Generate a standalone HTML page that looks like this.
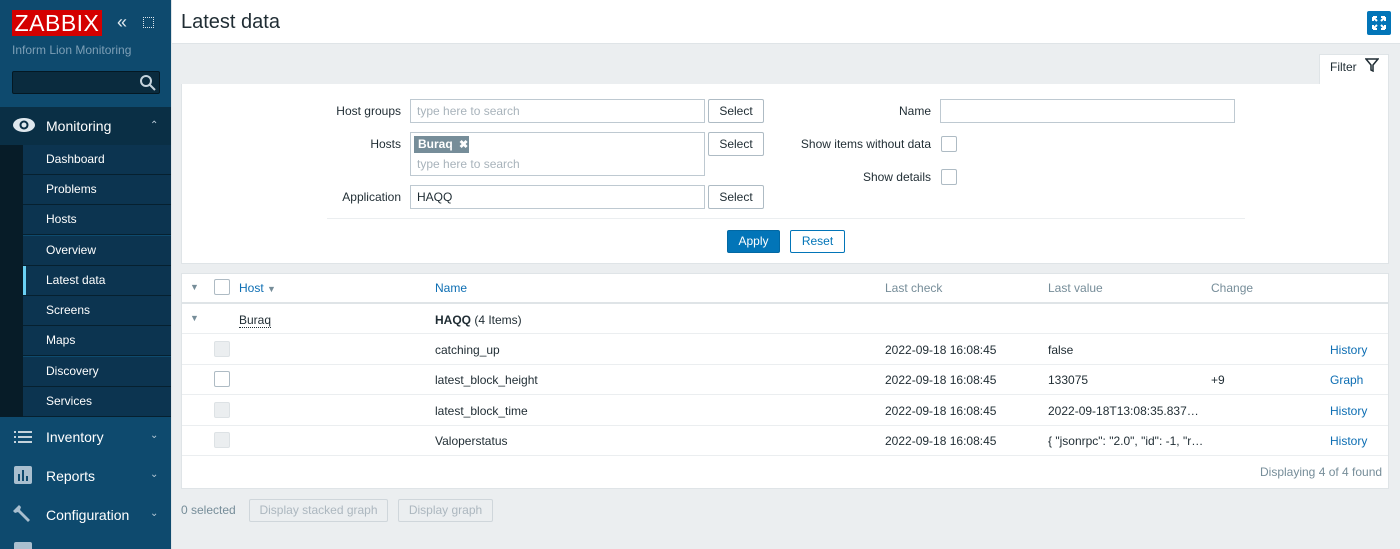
<!DOCTYPE html>
<html><head><meta charset="utf-8"><style>
*{box-sizing:border-box;margin:0;padding:0}
body{width:1400px;height:549px;overflow:hidden;background:#ebeef0;font-family:"Liberation Sans",Arial,sans-serif;font-size:12px;color:#1f2c33;position:relative}
.a{position:absolute}
#sb{left:0;top:0;width:171px;height:549px;background:#0e4a6e}
#sbb{left:171px;top:0;width:1px;height:549px;background:#dfe4e7}
.logo{left:12px;top:10px;width:90px;height:26px;background:#d40000;color:#fff;font-size:23px;line-height:26px;text-align:center;letter-spacing:0.5px}
.sub{color:#7d9fb6;font-size:12px}
.srch{left:12px;top:71px;width:148px;height:23px;background:#0a2b3e;border:1px solid #041823;border-radius:2px}
.mon{left:0;top:107px;width:171px;height:38px;background:#0a2f45}
.mi{color:#fff;font-size:14px}
.strip{left:0;top:145px;width:23px;height:272px;background:#071c28}
.si{left:23px;width:148px;height:30px;background:#0c3450;border-bottom:1px solid #06202f;color:#fff;font-size:12px;line-height:29px;padding-left:23px}
.chev{color:#b9cbd8;font-size:10px}
#hd{left:172px;top:0;width:1228px;height:44px;background:#fff;border-bottom:1px solid #dfe4e7}
.panel{background:#fff;border:1px solid #dfe4e7}
.lbl{text-align:right;width:240px;color:#1f2c33}
.inp{background:#fff;border:1px solid #bec9d1;height:24px;color:#a8b3bb;padding-left:6px;line-height:22px}
.btn{background:#fff;border:1px solid #aebbc4;height:24px;width:56px;text-align:center;line-height:22px;color:#1f2c33;border-radius:2px}
.cb{width:16px;height:16px;border:1px solid #aebbc4;border-radius:2px;background:#fff}
.cbd{width:16px;height:16px;border:1px solid #dde2e5;border-radius:2px;background:#ebeef0}
.row{left:182px;width:1206px;border-bottom:1px solid #ebeef0;height:30px}
.lnk{color:#0d6eb3}
.t{line-height:14px}
</style></head><body>
<div id="sb" class="a"></div><div id="sbb" class="a"></div>
<div class="a logo">ZABBIX</div>
<div class="a" style="left:117px;top:12px;color:#dfe8ee;font-size:18px;line-height:20px">«</div>
<div class="a" style="left:143px;top:17px;width:11px;height:11px;border:1px dotted #dfe8ee"></div>
<div class="a sub" style="left:12px;top:43px">Inform Lion Monitoring</div>
<div class="a srch"></div>
<svg class="a" style="left:139px;top:74px" width="18" height="18"><circle cx="7" cy="7" r="5" fill="none" stroke="#c5d3dc" stroke-width="2"/><line x1="11" y1="11" x2="16" y2="16" stroke="#c5d3dc" stroke-width="2"/></svg>
<div class="a mon"></div>
<svg class="a" style="left:12px;top:117px" width="24" height="16"><ellipse cx="12" cy="8" rx="11" ry="7" fill="#dfe8ee"/><circle cx="12" cy="8" r="4.5" fill="#0a2f45"/><circle cx="12" cy="8" r="2.5" fill="#dfe8ee"/></svg>
<div class="a mi" style="left:46px;top:118px">Monitoring</div>
<div class="a chev" style="left:150px;top:120px">&#8963;</div>
<div class="a strip"></div>
<div class="a si" style="top:145px">Dashboard</div>
<div class="a si" style="top:175px">Problems</div>
<div class="a si" style="top:205px">Hosts</div>
<div class="a si" style="top:236px">Overview</div>
<div class="a si" style="top:266px">Latest data</div>
<div class="a" style="left:23px;top:266px;width:3px;height:29px;background:#6ad0f3"></div>
<div class="a si" style="top:296px">Screens</div>
<div class="a si" style="top:326px">Maps</div>
<div class="a si" style="top:357px">Discovery</div>
<div class="a si" style="top:387px">Services</div>
<svg class="a" style="left:14px;top:430px" width="20" height="14"><g fill="#c5d3dc"><rect x="0" y="1" width="2" height="2"/><rect x="4" y="1" width="14" height="2"/><rect x="0" y="6" width="2" height="2"/><rect x="4" y="6" width="14" height="2"/><rect x="0" y="11" width="2" height="2"/><rect x="4" y="11" width="14" height="2"/></g></svg>
<div class="a mi" style="left:46px;top:429px">Inventory</div><div class="a chev" style="left:150px;top:430px">&#8964;</div>
<svg class="a" style="left:14px;top:466px" width="18" height="18"><rect width="18" height="18" rx="2" fill="#a9bfcf"/><g fill="#0e4a6e"><rect x="4" y="8" width="2" height="7"/><rect x="8" y="4" width="2" height="11"/><rect x="12" y="10" width="2" height="5"/></g></svg>
<div class="a mi" style="left:46px;top:468px">Reports</div><div class="a chev" style="left:150px;top:469px">&#8964;</div>
<svg class="a" style="left:13px;top:504px" width="20" height="20"><path d="M3 4 L6 1 L8 3 L7 6 L17 16 L15 18 L5 8 L2 9 L0 7 Z" fill="#a9bfcf"/></svg>
<div class="a mi" style="left:46px;top:507px">Configuration</div><div class="a chev" style="left:150px;top:508px">&#8964;</div>
<div class="a" style="left:14px;top:542px;width:18px;height:7px;background:#a9bfcf;border-radius:2px 2px 0 0"></div>

<div id="hd" class="a"></div>
<div class="a" style="left:181px;top:11px;font-size:20px;color:#1f2c33">Latest data</div>
<div class="a" style="left:1367px;top:11px;width:24px;height:24px;background:#0275b8;border-radius:2px"></div>
<svg class="a" style="left:1370px;top:14px" width="18" height="18"><g stroke="#fff" stroke-width="2" fill="none"><path d="M3 3 L7 7 M3 3h4 M3 3v4"/><path d="M15 3 L11 7 M15 3h-4 M15 3v4"/><path d="M3 15 L7 11 M3 15h4 M3 15v-4"/><path d="M15 15 L11 11 M15 15h-4 M15 15v-4"/></g></svg>

<div class="a" style="left:1319px;top:54px;width:70px;height:31px;background:#fff;border:1px solid #dfe4e7;border-bottom:none"></div>
<div class="a" style="left:1330px;top:60px">Filter</div>
<svg class="a" style="left:1365px;top:58px" width="14" height="14"><path d="M1 1 H13 L8 7 V13 L6 12 V7 Z" fill="none" stroke="#1f2c33" stroke-width="1.5"/></svg>
<div class="a panel" style="left:181px;top:84px;width:1208px;height:180px;border-top:none"></div>
<div class="a" style="left:1320px;top:84px;width:68px;height:1px;background:#fff"></div>

<div class="a lbl" style="left:161px;top:104px">Host groups</div>
<div class="a inp" style="left:410px;top:99px;width:295px">type here to search</div>
<div class="a btn" style="left:708px;top:99px">Select</div>
<div class="a lbl" style="left:161px;top:137px">Hosts</div>
<div class="a inp" style="left:410px;top:132px;width:295px;height:44px"></div>
<div class="a" style="left:414px;top:136px;width:55px;height:17px;background:#768d99;color:#fff;font-weight:bold;line-height:17px;padding-left:4px">Buraq <span style="font-size:11px;margin-left:3px">&#10006;</span></div>
<div class="a" style="left:417px;top:157px;color:#a8b3bb">type here to search</div>
<div class="a btn" style="left:708px;top:132px">Select</div>
<div class="a lbl" style="left:161px;top:190px">Application</div>
<div class="a inp" style="left:410px;top:185px;width:295px;color:#1f2c33">HAQQ</div>
<div class="a btn" style="left:708px;top:185px">Select</div>

<div class="a lbl" style="left:691px;top:104px">Name</div>
<div class="a inp" style="left:940px;top:99px;width:295px"></div>
<div class="a lbl" style="left:691px;top:137px">Show items without data</div>
<div class="a cb" style="left:941px;top:136px"></div>
<div class="a lbl" style="left:691px;top:170px">Show details</div>
<div class="a cb" style="left:941px;top:169px"></div>
<div class="a" style="left:327px;top:218px;width:918px;height:1px;background:#ebeef0"></div>
<div class="a" style="left:727px;top:230px;width:53px;height:23px;background:#0275b8;border:1px solid #0268a3;color:#fff;text-align:center;line-height:21px;border-radius:2px">Apply</div>
<div class="a" style="left:790px;top:230px;width:55px;height:23px;background:#fff;border:1px solid #0275b8;color:#0275b8;text-align:center;line-height:21px;border-radius:2px">Reset</div>

<div class="a panel" style="left:181px;top:273px;width:1208px;height:216px"></div>
<div class="a row" style="top:274px;border-bottom:2px solid #dfe4e7"></div>
<div class="a" style="left:190px;top:282px;color:#768d99;font-size:9px">&#9660;</div>
<div class="a cb" style="left:214px;top:279px"></div>
<div class="a lnk" style="left:239px;top:281px">Host <span style="font-size:9px;color:#768d99">&#9660;</span></div>
<div class="a lnk" style="left:435px;top:281px">Name</div>
<div class="a" style="left:885px;top:281px;color:#768d99">Last check</div>
<div class="a" style="left:1048px;top:281px;color:#768d99">Last value</div>
<div class="a" style="left:1211px;top:281px;color:#768d99">Change</div>

<div class="a row" style="top:304px"></div>
<div class="a" style="left:190px;top:313px;color:#768d99;font-size:9px">&#9660;</div>
<div class="a" style="left:239px;top:313px;border-bottom:1px dotted #1f2c33">Buraq</div>
<div class="a" style="left:435px;top:313px"><b>HAQQ</b> (4 Items)</div>

<div class="a row" style="top:335px"></div>
<div class="a cbd" style="left:214px;top:341px"></div>
<div class="a" style="left:435px;top:343px">catching_up</div>
<div class="a" style="left:885px;top:343px">2022-09-18 16:08:45</div>
<div class="a" style="left:1048px;top:343px">false</div>
<div class="a lnk" style="left:1330px;top:343px">History</div>

<div class="a row" style="top:365px"></div>
<div class="a cb" style="left:214px;top:371px"></div>
<div class="a" style="left:435px;top:373px">latest_block_height</div>
<div class="a" style="left:885px;top:373px">2022-09-18 16:08:45</div>
<div class="a" style="left:1048px;top:373px">133075</div>
<div class="a" style="left:1211px;top:373px">+9</div>
<div class="a lnk" style="left:1330px;top:373px">Graph</div>

<div class="a row" style="top:396px"></div>
<div class="a cbd" style="left:214px;top:402px"></div>
<div class="a" style="left:435px;top:404px">latest_block_time</div>
<div class="a" style="left:885px;top:404px">2022-09-18 16:08:45</div>
<div class="a" style="left:1048px;top:404px">2022-09-18T13:08:35.837…</div>
<div class="a lnk" style="left:1330px;top:404px">History</div>

<div class="a row" style="top:426px"></div>
<div class="a cbd" style="left:214px;top:432px"></div>
<div class="a" style="left:435px;top:434px">Valoperstatus</div>
<div class="a" style="left:885px;top:434px">2022-09-18 16:08:45</div>
<div class="a" style="left:1048px;top:434px">{ "jsonrpc": "2.0", "id": -1, "r…</div>
<div class="a lnk" style="left:1330px;top:434px">History</div>

<div class="a" style="left:1260px;top:465px;color:#768d99">Displaying 4 of 4 found</div>

<div class="a" style="left:181px;top:503px;color:#768d99">0 selected</div>
<div class="a" style="left:249px;top:499px;width:139px;height:23px;border:1px solid #cfd6db;color:#acb7bf;text-align:center;line-height:21px;border-radius:2px">Display stacked graph</div>
<div class="a" style="left:398px;top:499px;width:95px;height:23px;border:1px solid #cfd6db;color:#acb7bf;text-align:center;line-height:21px;border-radius:2px">Display graph</div>
</body></html>
